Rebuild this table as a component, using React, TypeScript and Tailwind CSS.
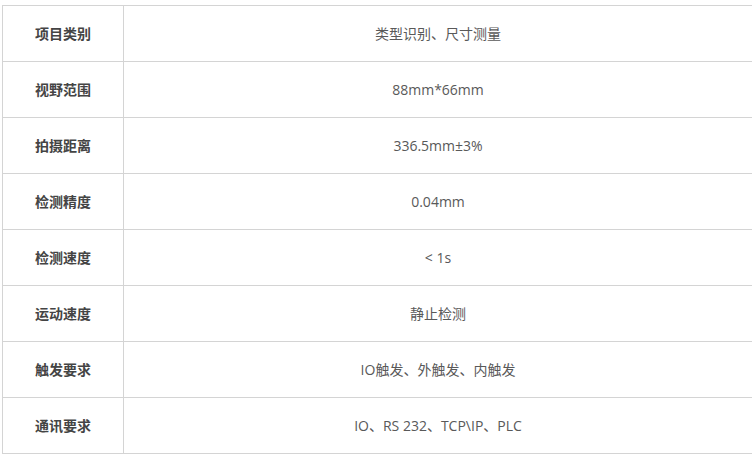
import React from 'react';

const rows: [string, string][] = [
    ['项目类别', '类型识别、尺寸测量'],
    ['视野范围', '88mm*66mm'],
    ['拍摄距离', '336.5mm±3%'],
    ['检测精度', '0.04mm'],
    ['检测速度', '< 1s'],
    ['运动速度', '静止检测'],
    ['触发要求', 'IO触发、外触发、内触发'],
    ['通讯要求', 'IO、RS 232、TCP\\IP、PLC'],
];

export default function App() {
    return (
        <div className="w-[752px] h-[458px] overflow-hidden bg-white pt-[5px] pl-[2px] font-['Noto_Sans_CJK_SC','Noto_Sans',sans-serif] text-[14px]">
            <div className="w-[751px] border-t border-l border-[#d4d4d4]">
                {rows.map(([label, value]) => (
                    <div key={label} className="flex h-[56px] border-b border-[#d4d4d4]">
                        <div className="w-[121px] shrink-0 border-r border-[#d4d4d4] flex items-center justify-center font-bold text-[#444]">
                            {label}
                        </div>
                        <div className="flex-1 border-r border-[#d4d4d4] flex items-center justify-center font-['Open_Sans','Noto_Sans_CJK_SC',sans-serif] text-[#595959]">
                            {value}
                        </div>
                    </div>
                ))}
            </div>
        </div>
    );
}
